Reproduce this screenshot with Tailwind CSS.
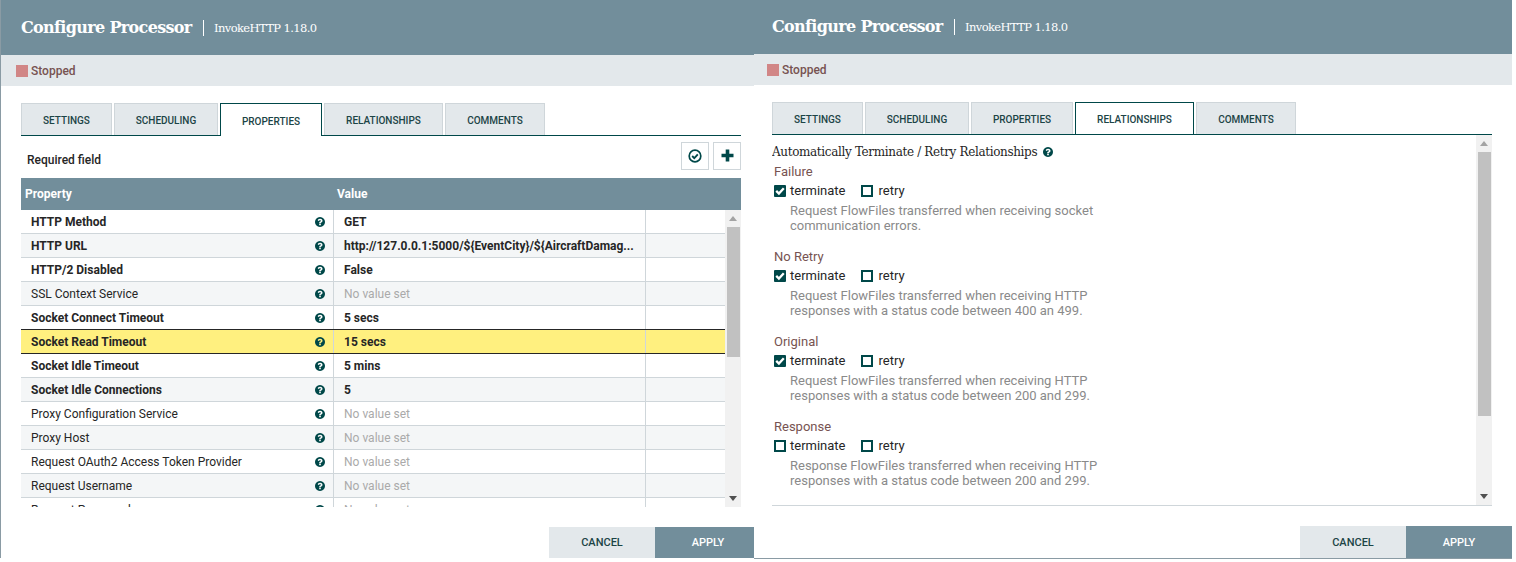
<!DOCTYPE html>
<html><head><meta charset="utf-8"><script src="https://cdn.jsdelivr.net/npm/@tailwindcss/browser@4"></script></head>
<body class="bg-white">
<svg class="hidden"><defs>
<symbol id="q" viewBox="128 128 1536 1536"><path fill="#004849" d="M1024 1376v-192q0-14-9-23t-23-9h-192q-14 0-23 9t-9 23v192q0 14 9 23t23 9h192q14 0 23-9t9-23zm256-672q0-88-55.5-163t-138.5-116-170-41q-243 0-371 213-15 24 8 42l132 100q7 6 19 6 16 0 25-12 53-68 86-92 34-24 86-24 48 0 85.5 26t37.5 59q0 38-20 61t-68 45q-63 28-115.5 86.5t-52.5 125.5v36q0 14 9 23t23 9h192q14 0 23-9t9-23q0-19 21.5-49.5t54.5-49.5q32-18 49-28.5t46-35 44.5-48 28-60.5 12.5-81zm384 192q0 209-103 385.5t-279.5 279.5-385.5 103-385.5-103-279.5-279.5-103-385.5 103-385.5 279.5-279.5 385.5-103 385.5 103 279.5 279.5 103 385.5z"/></symbol>
<symbol id="cb" viewBox="0 0 13 13"><rect width="13" height="13" rx="1" fill="#004849"/><path d="M2.4 6.4l2.9 2.9 5.3-5.8" fill="none" stroke="#fff" stroke-width="2.5"/></symbol>
</defs></svg>
<div class="flex w-[1516px] h-[562px] overflow-hidden font-['Roboto',sans-serif]">

<!-- LEFT PANEL -->
<section class="w-[754px] h-[558px] shrink-0 flex flex-col border-l border-l-[#8a9ba4] relative">
  <header class="h-[55px] shrink-0 bg-[#728e9b] flex items-center pl-5">
    <span class="font-['DejaVu_Serif',serif] font-bold text-[16px] text-white tracking-[-0.66px] w-[172px] whitespace-nowrap">Configure Processor</span>
    <span class="w-px h-[16px] bg-white ml-[10px] mr-[10px]"></span>
    <span class="font-['DejaVu_Serif',serif] text-[11.5px] text-white tracking-[-0.6px] whitespace-nowrap mt-[2px]">InvokeHTTP 1.18.0</span>
  </header>
  <div class="h-[31px] shrink-0 bg-[#e3e8eb] flex items-center pl-[15px] gap-[3px]">
    <span class="w-3 h-3 bg-[#d18686]"></span><span class="text-[12px] font-medium text-[#775351]">Stopped</span>
  </div>
  <div class="pl-5 pr-3 flex-1 flex flex-col">
    <nav class="mt-[17px] h-[33px] shrink-0 flex gap-[2px] border-b border-[#004849] text-[10px] font-medium text-[#1c4446] items-stretch w-[720px]">
      <a class="w-[91px] pt-[2px] flex items-center justify-center bg-[#e3e8eb] border border-[#cfd6da] border-b-0">SETTINGS</a>
      <a class="w-[104px] pt-[2px] flex items-center justify-center bg-[#e3e8eb] border border-[#cfd6da] border-b-0">SCHEDULING</a>
      <a class="w-[102px] pt-[2px] h-[33px] flex items-center justify-center bg-white border border-[#004849] border-b-0">PROPERTIES</a>
      <a class="w-[119px] pt-[2px] flex items-center justify-center bg-[#e3e8eb] border border-[#cfd6da] border-b-0">RELATIONSHIPS</a>
      <a class="w-[100px] pt-[2px] flex items-center justify-center bg-[#e3e8eb] border border-[#cfd6da] border-b-0">COMMENTS</a>
    </nav>
    <div class="h-[42px] shrink-0 flex items-center justify-between w-[720px] pl-[6px]">
      <span class="text-[12px] font-medium text-[#262626] mt-[6px]">Required field</span>
      <div class="flex gap-[4px] mt-[-3px]">
        <span class="w-[28px] h-[28px] border border-[#cfd6da] flex items-center justify-center"><svg width="14" height="14" viewBox="0 0 14 14"><circle cx="7" cy="7" r="5.8" fill="none" stroke="#004849" stroke-width="1.7"/><path d="M4.2 7l2.1 2.1 3.5-3.8" fill="none" stroke="#004849" stroke-width="1.8"/></svg></span>
        <span class="w-[28px] h-[28px] border border-[#cfd6da] flex items-center justify-center"><svg width="13" height="13" viewBox="0 0 13 13"><path d="M6.5 0.5v12M0.5 6.5h12" stroke="#004849" stroke-width="3.6"/></svg></span>
      </div>
    </div>
    <div class="w-[720px] h-[32px] shrink-0 bg-[#728e9b] flex items-center text-[12px] font-bold text-white">
      <span class="w-[312px] pl-1">Property</span><span class="pl-[4px]">Value</span>
    </div>
    <div class="w-[720px] h-[297px] flex overflow-hidden relative">
      <div class="w-[704px] shrink-0 text-[12px] text-[#262626]">
        <div class="flex h-[24px] items-center border-b border-[#cfd6da] bg-white font-bold"><span class="w-[312px] pl-[10px] flex justify-between items-center pr-[8px]">HTTP Method<svg class="w-[10px] h-[10px]"><use href="#q"/></svg></span><span class="w-[312px] h-full border-l border-[#cfd6da] pl-[10px] flex items-center">GET</span><span class="flex-1 h-full border-l border-[#cfd6da]"></span></div>
        <div class="flex h-[24px] items-center border-b border-[#cfd6da] bg-[#f4f6f7] font-bold"><span class="w-[312px] pl-[10px] flex justify-between items-center pr-[8px]">HTTP URL<svg class="w-[10px] h-[10px]"><use href="#q"/></svg></span><span class="w-[312px] h-full border-l border-[#cfd6da] pl-[10px] flex items-center whitespace-nowrap">http://127.0.0.1:5000/${EventCity}/${AircraftDamag...</span><span class="flex-1 h-full border-l border-[#cfd6da]"></span></div>
        <div class="flex h-[24px] items-center border-b border-[#cfd6da] bg-white font-bold"><span class="w-[312px] pl-[10px] flex justify-between items-center pr-[8px]">HTTP/2 Disabled<svg class="w-[10px] h-[10px]"><use href="#q"/></svg></span><span class="w-[312px] h-full border-l border-[#cfd6da] pl-[10px] flex items-center">False</span><span class="flex-1 h-full border-l border-[#cfd6da]"></span></div>
        <div class="flex h-[24px] items-center border-b border-[#cfd6da] bg-[#f4f6f7]"><span class="w-[312px] pl-[10px] flex justify-between items-center pr-[8px]">SSL Context Service<svg class="w-[10px] h-[10px]"><use href="#q"/></svg></span><span class="w-[312px] h-full border-l border-[#cfd6da] pl-[10px] flex items-center text-[#aaa]">No value set</span><span class="flex-1 h-full border-l border-[#cfd6da]"></span></div>
        <div class="flex h-[24px] items-center border-b border-[#262626] bg-white font-bold"><span class="w-[312px] pl-[10px] flex justify-between items-center pr-[8px]">Socket Connect Timeout<svg class="w-[10px] h-[10px]"><use href="#q"/></svg></span><span class="w-[312px] h-full border-l border-[#cfd6da] pl-[10px] flex items-center">5 secs</span><span class="flex-1 h-full border-l border-[#cfd6da]"></span></div>
        <div class="flex h-[24px] items-center border-b border-[#262626] bg-[#fff07f] font-bold"><span class="w-[312px] pl-[10px] flex justify-between items-center pr-[8px]">Socket Read Timeout<svg class="w-[10px] h-[10px]"><use href="#q"/></svg></span><span class="w-[312px] h-full border-l border-[#cfd6da] pl-[10px] flex items-center">15 secs</span><span class="flex-1 h-full border-l border-[#cfd6da]"></span></div>
        <div class="flex h-[24px] items-center border-b border-[#cfd6da] bg-white font-bold"><span class="w-[312px] pl-[10px] flex justify-between items-center pr-[8px]">Socket Idle Timeout<svg class="w-[10px] h-[10px]"><use href="#q"/></svg></span><span class="w-[312px] h-full border-l border-[#cfd6da] pl-[10px] flex items-center">5 mins</span><span class="flex-1 h-full border-l border-[#cfd6da]"></span></div>
        <div class="flex h-[24px] items-center border-b border-[#cfd6da] bg-[#f4f6f7] font-bold"><span class="w-[312px] pl-[10px] flex justify-between items-center pr-[8px]">Socket Idle Connections<svg class="w-[10px] h-[10px]"><use href="#q"/></svg></span><span class="w-[312px] h-full border-l border-[#cfd6da] pl-[10px] flex items-center">5</span><span class="flex-1 h-full border-l border-[#cfd6da]"></span></div>
        <div class="flex h-[24px] items-center border-b border-[#cfd6da] bg-white"><span class="w-[312px] pl-[10px] flex justify-between items-center pr-[8px]">Proxy Configuration Service<svg class="w-[10px] h-[10px]"><use href="#q"/></svg></span><span class="w-[312px] h-full border-l border-[#cfd6da] pl-[10px] flex items-center text-[#aaa]">No value set</span><span class="flex-1 h-full border-l border-[#cfd6da]"></span></div>
        <div class="flex h-[24px] items-center border-b border-[#cfd6da] bg-[#f4f6f7]"><span class="w-[312px] pl-[10px] flex justify-between items-center pr-[8px]">Proxy Host<svg class="w-[10px] h-[10px]"><use href="#q"/></svg></span><span class="w-[312px] h-full border-l border-[#cfd6da] pl-[10px] flex items-center text-[#aaa]">No value set</span><span class="flex-1 h-full border-l border-[#cfd6da]"></span></div>
        <div class="flex h-[24px] items-center border-b border-[#cfd6da] bg-white"><span class="w-[312px] pl-[10px] flex justify-between items-center pr-[8px]">Request OAuth2 Access Token Provider<svg class="w-[10px] h-[10px]"><use href="#q"/></svg></span><span class="w-[312px] h-full border-l border-[#cfd6da] pl-[10px] flex items-center text-[#aaa]">No value set</span><span class="flex-1 h-full border-l border-[#cfd6da]"></span></div>
        <div class="flex h-[24px] items-center border-b border-[#cfd6da] bg-[#f4f6f7]"><span class="w-[312px] pl-[10px] flex justify-between items-center pr-[8px]">Request Username<svg class="w-[10px] h-[10px]"><use href="#q"/></svg></span><span class="w-[312px] h-full border-l border-[#cfd6da] pl-[10px] flex items-center text-[#aaa]">No value set</span><span class="flex-1 h-full border-l border-[#cfd6da]"></span></div>
        <div class="flex h-[24px] items-center border-b border-[#cfd6da] bg-white"><span class="w-[312px] pl-[10px] flex justify-between items-center pr-[8px]">Request Password<svg class="w-[10px] h-[10px]"><use href="#q"/></svg></span><span class="w-[312px] h-full border-l border-[#cfd6da] pl-[10px] flex items-center text-[#aaa]">No value set</span><span class="flex-1 h-full border-l border-[#cfd6da]"></span></div>
      </div>
      <div class="w-[16px] shrink-0 bg-[#f1f1f1] flex flex-col items-center pt-[6px]">
        <svg width="8" height="5" viewBox="0 0 8 5"><path d="M4 0l4 5H0z" fill="#a3a3a3"/></svg>
        <div class="w-[13px] h-[130px] bg-[#c1c1c1] mt-[6px]"></div>
        <svg class="mt-auto mb-[6px]" width="8" height="5" viewBox="0 0 8 5"><path d="M0 0h8L4 5z" fill="#505050"/></svg>
      </div>
    </div>
    <div class="flex justify-end mt-auto -mr-3 text-[11px] font-medium">
      <button class="w-[106px] h-[31px] pt-[2px] bg-[#e3e8eb] text-[#1c4446]">CANCEL</button>
      <button class="w-[99px] h-[31px] pt-[2px] pl-[7px] bg-[#728e9b] text-white">APPLY</button>
    </div>
  </div>
</section>

<!-- RIGHT PANEL -->
<section class="w-[758px] h-[559px] shrink-0 flex flex-col border-b border-[#8a9ba4]">
  <header class="h-[54px] shrink-0 bg-[#728e9b] flex items-center pl-[18px]">
    <span class="font-['DejaVu_Serif',serif] font-bold text-[16px] text-white tracking-[-0.66px] w-[172px] whitespace-nowrap">Configure Processor</span>
    <span class="w-px h-[16px] bg-white ml-[10px] mr-[10px]"></span>
    <span class="font-['DejaVu_Serif',serif] text-[11.5px] text-white tracking-[-0.6px] whitespace-nowrap mt-[2px]">InvokeHTTP 1.18.0</span>
  </header>
  <div class="h-[31px] shrink-0 bg-[#e3e8eb] flex items-center pl-[13px] gap-[3px]">
    <span class="w-3 h-3 bg-[#d18686]"></span><span class="text-[12px] font-medium text-[#775351]">Stopped</span>
  </div>
  <div class="pl-[18px] flex-1 flex flex-col">
    <nav class="mt-[17px] h-[33px] shrink-0 flex gap-[2px] border-b border-[#004849] text-[10px] font-medium text-[#1c4446] items-stretch w-[720px]">
      <a class="w-[91px] pt-[2px] flex items-center justify-center bg-[#e3e8eb] border border-[#cfd6da] border-b-0">SETTINGS</a>
      <a class="w-[104px] pt-[2px] flex items-center justify-center bg-[#e3e8eb] border border-[#cfd6da] border-b-0">SCHEDULING</a>
      <a class="w-[102px] pt-[2px] flex items-center justify-center bg-[#e3e8eb] border border-[#cfd6da] border-b-0">PROPERTIES</a>
      <a class="w-[119px] pt-[2px] flex items-center justify-center bg-white border border-[#004849] border-b-0">RELATIONSHIPS</a>
      <a class="w-[100px] pt-[2px] flex items-center justify-center bg-[#e3e8eb] border border-[#cfd6da] border-b-0">COMMENTS</a>
    </nav>
    <div class="w-[720px] h-[371px] flex border-b border-[#cfd6da] overflow-hidden">
      <div class="w-[704px] shrink-0 pl-[2px] text-[13px]">
        <div class="flex items-center -ml-[2px] h-[16px] mt-[9px] font-['DejaVu_Serif',serif] text-[12px] text-[#262626] tracking-[-0.35px] gap-[6px]">Automatically Terminate / Retry Relationships <svg class="w-[10px] h-[10px]"><use href="#q"/></svg></div>
        <div class="mt-[4px] h-[15px] leading-[15px] text-[#775351]">Failure</div>
        <div class="mt-[4px] h-[16px] flex items-center text-[#262626]"><svg class="w-[12px] h-[12px]"><use href="#cb"/></svg><span class="ml-[4px]">terminate</span><span class="w-[12px] h-[12px] border-2 border-[#004849] ml-[15px]"></span><span class="ml-[6px]">retry</span></div>
        <div class="ml-[16px] mt-[4px] leading-[15px] text-[#8a8a8a] w-[330px]">Request FlowFiles transferred when receiving socket communication errors.</div>
        <div class="mt-[16px] h-[15px] leading-[15px] text-[#775351]">No Retry</div>
        <div class="mt-[4px] h-[16px] flex items-center text-[#262626]"><svg class="w-[12px] h-[12px]"><use href="#cb"/></svg><span class="ml-[4px]">terminate</span><span class="w-[12px] h-[12px] border-2 border-[#004849] ml-[15px]"></span><span class="ml-[6px]">retry</span></div>
        <div class="ml-[16px] mt-[4px] leading-[15px] text-[#8a8a8a] w-[330px]">Request FlowFiles transferred when receiving HTTP responses with a status code between 400 an 499.</div>
        <div class="mt-[16px] h-[15px] leading-[15px] text-[#775351]">Original</div>
        <div class="mt-[4px] h-[16px] flex items-center text-[#262626]"><svg class="w-[12px] h-[12px]"><use href="#cb"/></svg><span class="ml-[4px]">terminate</span><span class="w-[12px] h-[12px] border-2 border-[#004849] ml-[15px]"></span><span class="ml-[6px]">retry</span></div>
        <div class="ml-[16px] mt-[4px] leading-[15px] text-[#8a8a8a] w-[330px]">Request FlowFiles transferred when receiving HTTP responses with a status code between 200 and 299.</div>
        <div class="mt-[16px] h-[15px] leading-[15px] text-[#775351]">Response</div>
        <div class="mt-[4px] h-[16px] flex items-center text-[#262626]"><span class="w-[12px] h-[12px] border-2 border-[#004849]"></span><span class="ml-[4px]">terminate</span><span class="w-[12px] h-[12px] border-2 border-[#004849] ml-[15px]"></span><span class="ml-[6px]">retry</span></div>
        <div class="ml-[16px] mt-[4px] leading-[15px] text-[#8a8a8a] w-[330px]">Response FlowFiles transferred when receiving HTTP responses with a status code between 200 and 299.</div>
      </div>
      <div class="w-[16px] shrink-0 bg-[#f1f1f1] flex flex-col items-center pt-[6px]">
        <svg width="8" height="5" viewBox="0 0 8 5"><path d="M4 0l4 5H0z" fill="#a3a3a3"/></svg>
        <div class="w-[13px] h-[264px] bg-[#c1c1c1] mt-[6px]"></div>
        <svg class="mt-auto mb-[6px]" width="8" height="5" viewBox="0 0 8 5"><path d="M0 0h8L4 5z" fill="#505050"/></svg>
      </div>
    </div>
    <div class="flex justify-end mt-auto text-[11px] font-medium">
      <button class="w-[106px] h-[32px] pt-[2px] bg-[#e3e8eb] text-[#1c4446]">CANCEL</button>
      <button class="w-[106px] h-[32px] pt-[2px] bg-[#728e9b] text-white mr-0">APPLY</button>
    </div>
  </div>
</section>
</div>
</body></html>
